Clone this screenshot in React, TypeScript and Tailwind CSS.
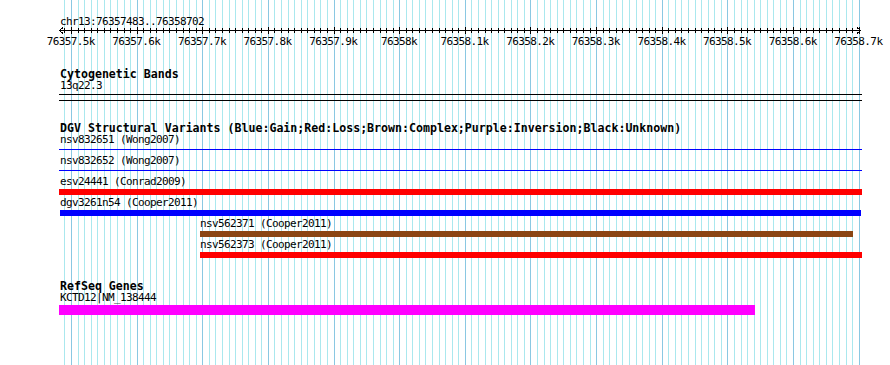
import React from 'react'

// genomic coordinate -> screen x (px)
const START = 76357483
const END = 76358702
const PX_PER_BP = 0.6564
const toX = (bp: number) => 71 + (bp - 76357500) * PX_PER_BP

const gridStops: number[] = []
for (let bp = 76357490; bp <= 76358700; bp += 10) gridStops.push(bp)

const majorLabels = Array.from({ length: 13 }, (_, i) => {
  const bp = 76357500 + i * 100
  const k = bp / 1000
  return { bp, label: `${Number.isInteger(k) ? k : k.toFixed(1)}k` }
})

const GridLines = () => (
  <svg className="absolute inset-0" width={890} height={365} shapeRendering="crispEdges">
    {gridStops.map(bp => {
      const x = Math.round(toX(bp)) + 0.5
      const major = bp % 100 === 0
      return (
        <line
          key={bp}
          x1={x}
          x2={x}
          y1={0}
          y2={365}
          stroke={major ? '#8ac8e2' : '#aae8ee'}
          strokeWidth={1}
        />
      )
    })}
  </svg>
)

const Ruler = () => (
  <svg className="block h-[20px] w-[890px] overflow-visible" width={890} height={20} shapeRendering="crispEdges">
    <line x1={59} x2={861} y1={2.5} y2={2.5} stroke="#000" />
    <polyline points="63,-0.5 59.5,2.5 63,5.5" fill="none" stroke="#000" />
    <polyline points="857,-0.5 860.5,2.5 857,5.5" fill="none" stroke="#000" />
    {gridStops.map(bp => {
      const x = Math.round(toX(bp)) + 0.5
      const major = bp % 100 === 0
      return <line key={bp} x1={x} x2={x} y1={major ? -1 : 0} y2={major ? 6 : 5} stroke="#000" />
    })}
    {majorLabels.map(({ bp, label }) => (
      <text
        key={bp}
        x={toX(bp) - 0.3}
        y={16.5}
        textAnchor="middle"
        fontSize={11}
        letterSpacing={-0.62}
        fontFamily="'DejaVu Sans Mono', monospace"
        fill="#000"
        shapeRendering="auto"
      >
        {label}
      </text>
    ))}
  </svg>
)

const TrackTitle = ({ children, className }: { children: React.ReactNode; className: string }) => (
  <div className={`pl-[60px] text-[11.6px] font-bold leading-[12px] tracking-normal ${className}`}>{children}</div>
)

interface Variant {
  name: string
  textPad: string
  span: string
  kind: 'line' | 'bar'
  color: string
}

const variants: Variant[] = [
  { name: 'nsv832651 (Wong2007)', textPad: 'pl-[60px]', span: 'ml-[59px] w-[803px]', kind: 'line', color: 'bg-[#0000ff]' },
  { name: 'nsv832652 (Wong2007)', textPad: 'pl-[60px]', span: 'ml-[59px] w-[803px]', kind: 'line', color: 'bg-[#0000ff]' },
  { name: 'esv24441 (Conrad2009)', textPad: 'pl-[60px]', span: 'ml-[59px] w-[803px]', kind: 'bar', color: 'bg-[#ff0000]' },
  { name: 'dgv3261n54 (Cooper2011)', textPad: 'pl-[60px]', span: 'ml-[60px] w-[801px]', kind: 'bar', color: 'bg-[#0000ff]' },
  { name: 'nsv562371 (Cooper2011)', textPad: 'pl-[200px]', span: 'ml-[200px] w-[653px]', kind: 'bar', color: 'bg-[#8b4513]' },
  { name: 'nsv562373 (Cooper2011)', textPad: 'pl-[200px]', span: 'ml-[200px] w-[662px]', kind: 'bar', color: 'bg-[#ff0000]' },
]

const VariantRow = ({ v }: { v: Variant }) => (
  <div className="h-[21px]">
    <div className={`h-[12px] ${v.textPad}`}>{v.name}</div>
    <div className={`mt-[1px] h-[6px] ${v.span}`}>
      {v.kind === 'bar' ? (
        <div className={`h-full ${v.color}`} />
      ) : (
        <div className="pt-[2px]">
          <div className={`h-px ${v.color}`} />
        </div>
      )}
    </div>
  </div>
)

export default function App() {
  return (
    <div className="relative h-[365px] w-[890px] overflow-hidden bg-white font-['DejaVu_Sans_Mono',monospace] text-[11px] leading-[12px] tracking-[-0.62px] text-black">
      <GridLines />
      <div className="relative flex flex-col">
        <div className="mt-[16px] h-[12px] pl-[60px]">
          chr13:{START}..{END}
        </div>
        <Ruler />

        <TrackTitle className="mt-[20px]">Cytogenetic Bands</TrackTitle>
        <div className="h-[12px] pl-[60px]">13q22.3</div>
        <div className="ml-[59px] mt-[2px] h-[7px] w-[803px] border-y border-black" />

        <TrackTitle className="mt-[21px]">
          DGV Structural Variants (Blue:Gain;Red:Loss;Brown:Complex;Purple:Inversion;Black:Unknown)
        </TrackTitle>
        {variants.map(v => (
          <VariantRow key={v.name} v={v} />
        ))}

        <TrackTitle className="mt-[20px]">RefSeq Genes</TrackTitle>
        <div className="h-[12px] pl-[60px]">KCTD12|NM_138444</div>
        <div className="ml-[59px] mt-[1px] h-[10px] w-[696px] bg-[#ff00ff]" />
      </div>
    </div>
  )
}
